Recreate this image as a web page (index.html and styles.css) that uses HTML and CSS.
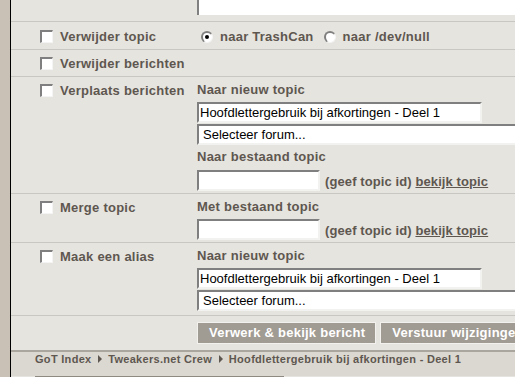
FILE: index.html
```html
<!DOCTYPE html>
<html lang="nl">

<head>
    <meta charset="UTF-8">
    <title>Topic beheer</title>
    <link rel="stylesheet" href="styles.css">
</head>

<body>
    <div class="page">
        <div class="side"></div>
        <div class="main">

            <div class="row top">
                <div></div>
                <div class="col-right">
                    <div class="textarea"></div>
                </div>
            </div>

            <div class="row single">
                <div class="col-left"><span class="check"></span>Verwijder topic</div>
                <div class="col-right radios">
                    <span class="radio checked"></span><span class="opt">naar TrashCan</span>
                    <span class="radio"></span><span class="opt">naar /dev/null</span>
                </div>
            </div>

            <div class="row single tight">
                <div class="col-left"><span class="check"></span>Verwijder berichten</div>
                <div class="col-right"></div>
            </div>

            <div class="row">
                <div class="col-left"><span class="check"></span>Verplaats berichten</div>
                <div class="col-right">
                    <div class="lbl">Naar nieuw topic</div>
                    <div class="field wide">Hoofdlettergebruik bij afkortingen - Deel 1</div>
                    <div class="field select">Selecteer forum...</div>
                    <div class="lbl second">Naar bestaand topic</div>
                    <div class="inline">
                        <div class="field short"></div>
                        <span class="hint">(geef topic id) <u>bekijk topic</u></span>
                    </div>
                </div>
            </div>

            <div class="row">
                <div class="col-left"><span class="check"></span>Merge topic</div>
                <div class="col-right">
                    <div class="lbl">Met bestaand topic</div>
                    <div class="inline">
                        <div class="field short"></div>
                        <span class="hint">(geef topic id) <u>bekijk topic</u></span>
                    </div>
                </div>
            </div>

            <div class="row alias">
                <div class="col-left"><span class="check"></span>Maak een alias</div>
                <div class="col-right">
                    <div class="lbl">Naar nieuw topic</div>
                    <div class="field wide">Hoofdlettergebruik bij afkortingen - Deel 1</div>
                    <div class="field select">Selecteer forum...</div>
                </div>
            </div>

            <div class="row buttons">
                <div></div>
                <div class="col-right btns">
                    <div class="btn">Verwerk &amp; bekijk bericht</div>
                    <div class="btn">Verstuur wijzigingen</div>
                </div>
            </div>

            <div class="crumbs">
                GoT Index <span class="arrow"></span> Tweakers.net Crew <span class="arrow"></span> Hoofdlettergebruik bij afkortingen - Deel 1
            </div>
            <div class="bottombar"></div>

        </div>
    </div>
</body>

</html>
```

FILE: styles.css
```css
body {
    margin: 0;
    font-family: "Liberation Sans", Arial, sans-serif;
    background-color: #e6e4df;
    color: #5e5750;
    overflow: hidden;
}

.page {
    display: flex;
    height: 377px;
}

.side {
    width: 10px;
    background-color: #c9c1b5;
}

.main {
    flex: 1;
    border-left: 1px solid #000;
    min-width: 0;
}

.row {
    display: grid;
    grid-template-columns: 186px 1fr;
    align-items: start;
    border-bottom: 1px solid #c9c7c1;
    padding: 4px 0 2px;
    font-size: 13px;
    font-weight: bold;
    letter-spacing: 0.25px;
}

.row.top {
    padding: 0 0 6px;
}

.row.single {
    padding: 4px 0 2px;
}

.row.single.tight {
    padding: 3px 0 2px;
}

.row.alias {
    padding-bottom: 4px;
}

.col-left {
    display: flex;
    align-items: center;
    height: 18px;
    padding-left: 29px;
    white-space: nowrap;
}

.row.single .col-left {
    height: 21px;
}

.col-right {
    min-width: 0;
    white-space: nowrap;
}

.textarea {
    height: 15px;
    background-color: #fff;
    border-left: 2px solid #808080;
}

.check {
    width: 13px;
    height: 13px;
    box-sizing: border-box;
    background-color: #fff;
    border-top: 2px solid #7f7f7f;
    border-left: 2px solid #7f7f7f;
    border-right: 1px solid #f4f4f4;
    border-bottom: 1px solid #f4f4f4;
    margin-right: 7px;
}

.radios {
    display: flex;
    align-items: center;
    height: 21px;
}

.radio {
    width: 12px;
    height: 12px;
    box-sizing: border-box;
    border-radius: 50%;
    background-color: #fff;
    border-top: 2px solid #7f7f7f;
    border-left: 2px solid #7f7f7f;
    border-right: 1px solid #f4f4f4;
    border-bottom: 1px solid #f4f4f4;
    margin: 0 7px 0 4px;
    position: relative;
}

.radio.checked::after {
    content: "";
    position: absolute;
    left: 2px;
    top: 2px;
    width: 4px;
    height: 4px;
    border-radius: 50%;
    background-color: #000;
}

.opt {
    margin-right: 6px;
}

.lbl {
    line-height: 18px;
    margin-bottom: 3px;
}

.lbl.second {
    margin-top: 3px;
    margin-bottom: 4px;
}

.field {
    box-sizing: border-box;
    height: 21px;
    background-color: #fff;
    border-top: 2px solid #7f7f7f;
    border-left: 2px solid #7f7f7f;
    border-right: 2px solid #f2f2f0;
    border-bottom: 2px solid #f2f2f0;
    font-weight: normal;
    letter-spacing: 0;
    color: #000;
    line-height: 17px;
    padding-left: 1px;
}

.field.wide {
    width: 285px;
}

.field.select {
    width: 340px;
    margin-top: 1px;
    padding-left: 4px;
}

.field.short {
    width: 123px;
}

.inline {
    display: flex;
    align-items: center;
    gap: 5px;
}

.hint {
    padding-top: 2px;
    letter-spacing: 0.1px;
}

.row.buttons {
    padding: 6px 0 6px;
    border-bottom: none;
}

.btns {
    display: flex;
    gap: 4px;
}

.btn {
    background-color: #a09b93;
    color: #fff;
    border: 1px solid #f2f1ee;
    padding: 0 10px 0 11px;
    height: 20px;
    line-height: 19px;
    font-size: 13px;
}

.crumbs {
    border-top: 2px solid #aaa59d;
    background-color: #dbd8d1;
    height: 24px;
    line-height: 15px;
    padding-left: 24px;
    font-size: 11px;
    font-weight: bold;
    letter-spacing: 0.3px;
    white-space: nowrap;
}

.arrow {
    display: inline-block;
    width: 0;
    height: 0;
    border-top: 4px solid transparent;
    border-bottom: 4px solid transparent;
    border-left: 4px solid #5e5750;
    margin: 0 3px;
}

.bottombar {
    margin-left: 24px;
    width: 249px;
    height: 3px;
    background-color: #8e8981;
}
```
